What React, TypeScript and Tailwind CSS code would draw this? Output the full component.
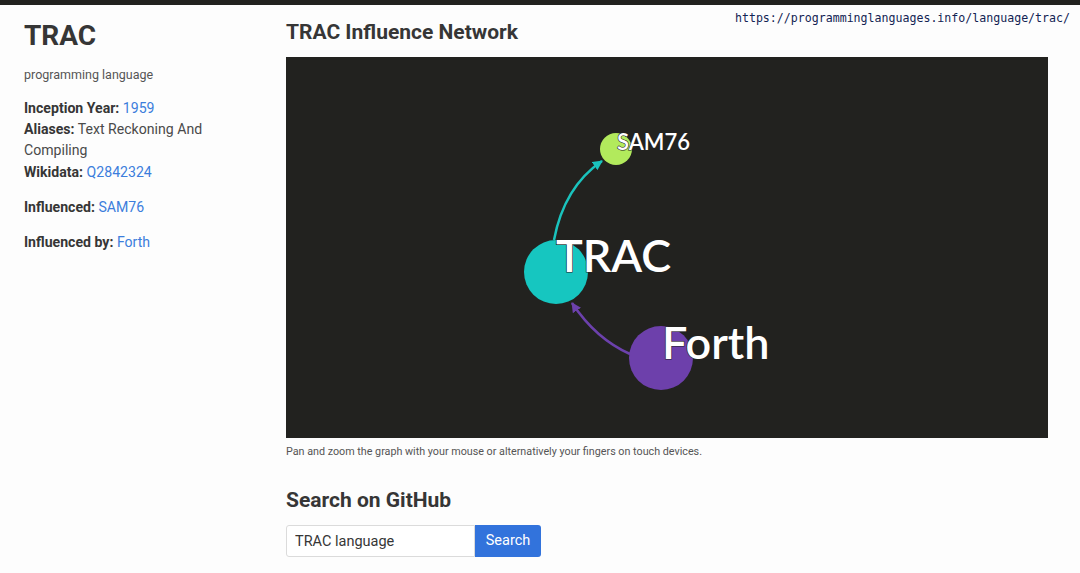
import React from 'react';

const Field: React.FC<{ label: string; children: React.ReactNode }> = ({ label, children }) => (
  <div>
    <span className="font-bold text-[#363636]">{label}</span> {children}
  </div>
);

const Link: React.FC<{ children: React.ReactNode }> = ({ children }) => (
  <a href="#" className="text-[#3c7ddc]">{children}</a>
);

const Graph: React.FC = () => (
  <svg width="762" height="381" viewBox="0 0 762 381" className="block">
    <defs>
      <marker id="tealArrow" viewBox="0 0 10 10" refX="9" refY="5" markerWidth="4" markerHeight="4" orient="auto">
        <path d="M0,0 L10,5 L0,10 z" fill="#1ac3bd" />
      </marker>
      <marker id="purpleArrow" viewBox="0 0 10 10" refX="9" refY="5" markerWidth="4" markerHeight="4" orient="auto">
        <path d="M0,0 L10,5 L0,10 z" fill="#6c41ac" />
      </marker>
    </defs>
    <rect width="762" height="381" fill="#22221f" />
    <path d="M268,183 Q278,130 316,104" stroke="#1ac3bd" strokeWidth="2.5" fill="none" markerEnd="url(#tealArrow)" />
    <path d="M344,297 Q310,282 286,246" stroke="#6c41ac" strokeWidth="2.5" fill="none" markerEnd="url(#purpleArrow)" />
    <circle cx="330" cy="92" r="16" fill="#b2ea5c" />
    <circle cx="270" cy="215" r="32" fill="#16c6c0" />
    <circle cx="375" cy="301" r="32" fill="#6d40ab" />
    <g
      fontFamily="Lato, 'Open Sans', sans-serif"
      fontWeight="600"
      fill="#ffffff"
      stroke="#22221f"
      strokeWidth="1.2"
      style={{ paintOrder: 'stroke' }}
    >
      <text x="331" y="93" fontSize="22">SAM76</text>
      <text x="270" y="215" fontSize="45">TRAC</text>
      <text x="376" y="302" fontSize="45">Forth</text>
    </g>
  </svg>
);

export default function App() {
  return (
    <div className="relative min-h-[573px] bg-[#fdfdfd] font-['Roboto',sans-serif] text-[#4a4a4a]">
      <div className="h-[5px] bg-[#22221f]" />
      <div className="absolute right-[10px] top-[10px] font-['DejaVu_Sans_Mono',monospace] text-[11.6px] text-[#122353]">
        https://programminglanguages.info/language/trac/
      </div>
      <div className="flex">
        <aside className="w-[286px] shrink-0 pl-[24px] pr-[50px] pt-[11px]">
          <h1 className="text-[28px] font-bold leading-[40px] text-[#363636]">TRAC</h1>
          <p className="mt-[10px] text-[12.5px] text-[#555]">programming language</p>
          <div className="mt-[13px] text-[14.1px] leading-[21.3px]">
            <Field label="Inception Year:"><Link>1959</Link></Field>
            <Field label="Aliases:">Text Reckoning And Compiling</Field>
            <Field label="Wikidata:"><Link>Q2842324</Link></Field>
          </div>
          <div className="mt-[14px] text-[14.1px] leading-[21px]">
            <Field label="Influenced:"><Link>SAM76</Link></Field>
          </div>
          <div className="mt-[14px] text-[14.1px] leading-[21px]">
            <Field label="Influenced by:"><Link>Forth</Link></Field>
          </div>
        </aside>
        <main className="w-[762px] pt-[12px]">
          <h2 className="text-[21px] font-bold leading-[30px] text-[#363636]">TRAC Influence Network</h2>
          <div className="mt-[10px]">
            <Graph />
          </div>
          <p className="mt-[6px] text-[10.75px] text-[#555]">
            Pan and zoom the graph with your mouse or alternatively your fingers on touch devices.
          </p>
          <h2 className="mt-[25px] text-[21px] font-bold leading-[30px] text-[#363636]">Search on GitHub</h2>
          <div className="mt-[10px] flex">
            <input
              defaultValue="TRAC language"
              className="h-[32px] w-[189px] rounded-l-[3px] border border-[#dbdbdb] bg-white px-[8px] text-[14.5px] text-[#363636] outline-none"
            />
            <button className="h-[32px] w-[66px] rounded-r-[3px] bg-[#3273dc] text-[14.5px] text-white">Search</button>
          </div>
        </main>
      </div>
    </div>
  );
}
